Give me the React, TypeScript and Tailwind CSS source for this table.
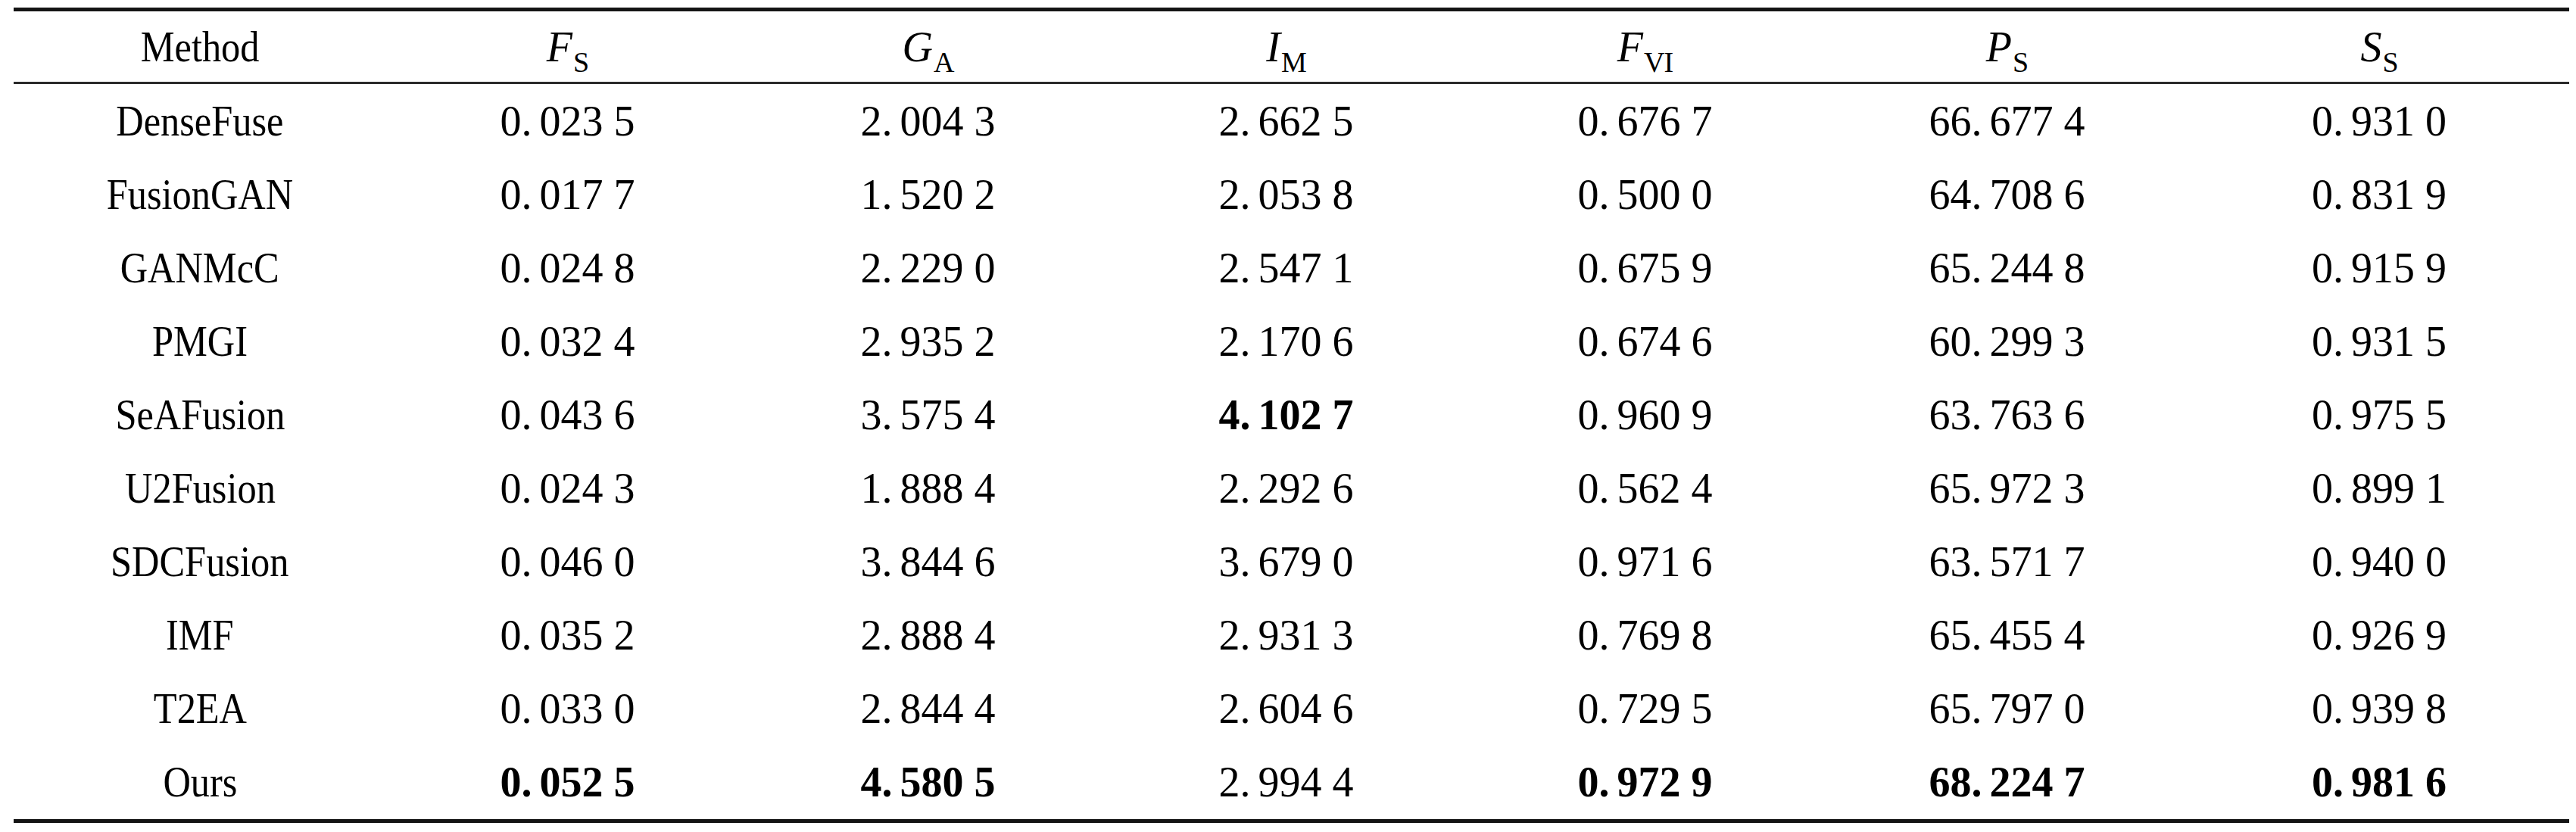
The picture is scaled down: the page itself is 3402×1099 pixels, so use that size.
import React from "react";

type Cell = { v: string; b?: boolean };
type Row = { name: string; cells: Cell[] };

const rows: Row[] = [
  { name: "DenseFuse", cells: [{ v: "0.0235" }, { v: "2.0043" }, { v: "2.6625" }, { v: "0.6767" }, { v: "66.6774" }, { v: "0.9310" }] },
  { name: "FusionGAN", cells: [{ v: "0.0177" }, { v: "1.5202" }, { v: "2.0538" }, { v: "0.5000" }, { v: "64.7086" }, { v: "0.8319" }] },
  { name: "GANMcC", cells: [{ v: "0.0248" }, { v: "2.2290" }, { v: "2.5471" }, { v: "0.6759" }, { v: "65.2448" }, { v: "0.9159" }] },
  { name: "PMGI", cells: [{ v: "0.0324" }, { v: "2.9352" }, { v: "2.1706" }, { v: "0.6746" }, { v: "60.2993" }, { v: "0.9315" }] },
  { name: "SeAFusion", cells: [{ v: "0.0436" }, { v: "3.5754" }, { v: "4.1027", b: true }, { v: "0.9609" }, { v: "63.7636" }, { v: "0.9755" }] },
  { name: "U2Fusion", cells: [{ v: "0.0243" }, { v: "1.8884" }, { v: "2.2926" }, { v: "0.5624" }, { v: "65.9723" }, { v: "0.8991" }] },
  { name: "SDCFusion", cells: [{ v: "0.0460" }, { v: "3.8446" }, { v: "3.6790" }, { v: "0.9716" }, { v: "63.5717" }, { v: "0.9400" }] },
  { name: "IMF", cells: [{ v: "0.0352" }, { v: "2.8884" }, { v: "2.9313" }, { v: "0.7698" }, { v: "65.4554" }, { v: "0.9269" }] },
  { name: "T2EA", cells: [{ v: "0.0330" }, { v: "2.8444" }, { v: "2.6046" }, { v: "0.7295" }, { v: "65.7970" }, { v: "0.9398" }] },
  { name: "Ours", cells: [{ v: "0.0525", b: true }, { v: "4.5805", b: true }, { v: "2.9944" }, { v: "0.9729", b: true }, { v: "68.2247", b: true }, { v: "0.9816", b: true }] },
];

const headers: { main: string; sub: string }[] = [
  { main: "F", sub: "S" },
  { main: "G", sub: "A" },
  { main: "I", sub: "M" },
  { main: "F", sub: "VI" },
  { main: "P", sub: "S" },
  { main: "S", sub: "S" },
];

const cols = "grid grid-cols-[492px_479px_473px_473px_475px_481px_502px]";

// Chinese journal style: "0.023 5"
const Num = ({ v, b }: Cell) => {
  const [int, frac] = v.split(".");
  return (
    <span className={b ? "font-bold" : "font-normal"}>
      <span className="mr-[10px]">{int}.</span>
      {frac.slice(0, 3)} {frac.slice(3)}
    </span>
  );
};

const App = () => {
  return (
    <div className="min-h-screen bg-white pt-[10px] pl-[18px] font-['Liberation_Serif','Times_New_Roman',serif] text-[56px] text-black">
      <div className="w-[3375px]">
        <div className="h-[5px] bg-[#141414]" />
        <div className={`${cols} h-[93px] items-center`}>
          <div className="text-center">
            <span className="inline-block scale-x-90">Method</span>
          </div>
          {headers.map((h, i) => (
            <div key={i} className="text-center leading-none">
              <span className="italic">{h.main}</span>
              <sub className="text-[38px] not-italic -bottom-[14px] ml-[1px] tracking-[-1px]">
                {h.sub}
              </sub>
            </div>
          ))}
        </div>
        <div className="h-[3px] bg-[#2a2a2a]" />
        {rows.map((r) => (
          <div key={r.name} className={`${cols} h-[97.1px] items-center leading-none`}>
            <div className="text-center">
              <span className="inline-block scale-x-90">{r.name}</span>
            </div>
            {r.cells.map((c, i) => (
              <div key={i} className="text-center">
                <Num {...c} />
              </div>
            ))}
          </div>
        ))}
        <div className="h-[5px] bg-[#141414]" />
      </div>
    </div>
  );
};

export default App;
